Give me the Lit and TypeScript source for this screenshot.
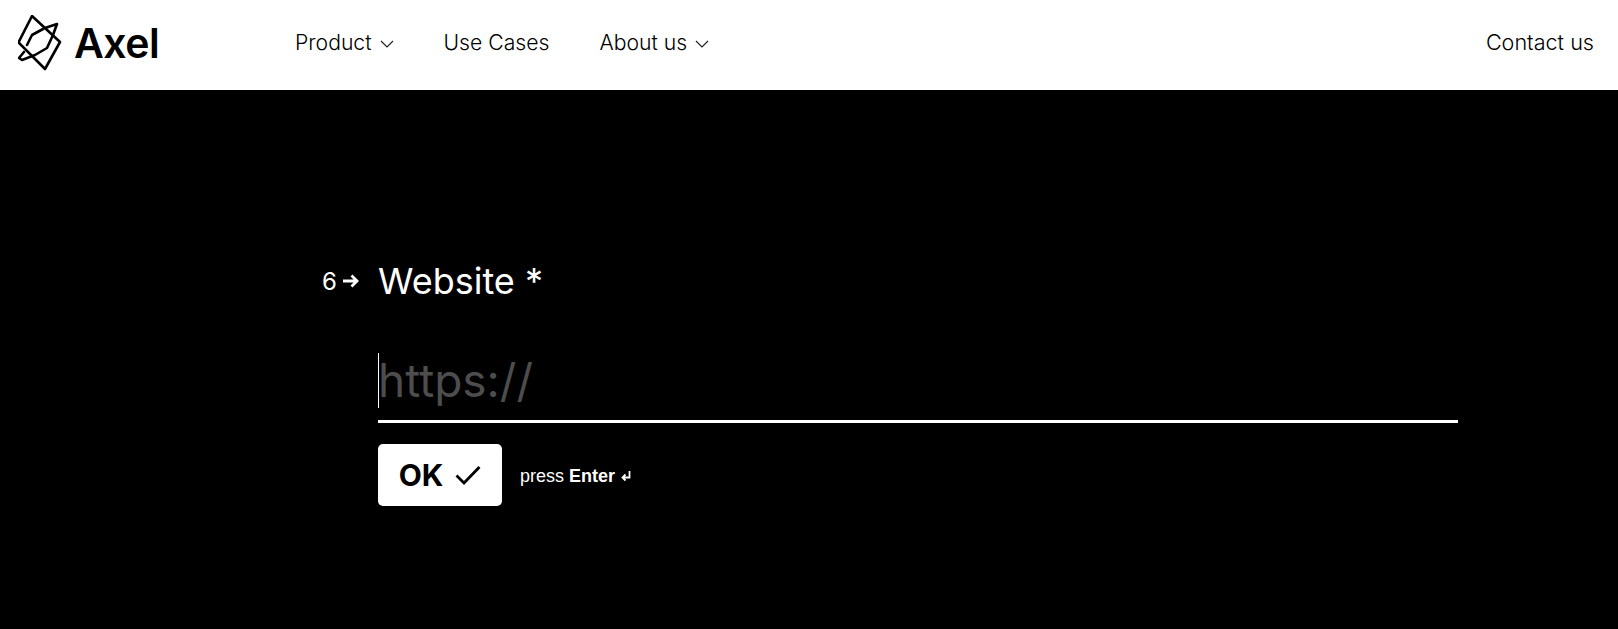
import { LitElement, html, css, svg } from "lit";
import { customElement } from "lit/decorators.js";

const chevron = svg`<svg class="chev" width="14" height="8" viewBox="0 0 14 8" fill="none" stroke="#222" stroke-width="1.2"><path d="M1 1 7 7 13 1"/></svg>`;

@customElement("app-root")
export class AppRoot extends LitElement {
  static styles = css`
    :host { display: block; width: 100%; height: 629px; background: #000; overflow: hidden; font-family: Inter, sans-serif; }
    header { height: 90px; background: #fff; display: flex; align-items: center; padding: 0 24px 4px 18px; box-sizing: border-box; }
    .brand { display: flex; align-items: center; gap: 12px; width: 277px; }
    .brand span { font-size: 41px; font-weight: 600; color: #000; letter-spacing: -0.5px; line-height: 1; }
    nav { display: flex; gap: 50px; flex: 1; padding-bottom: 2px; }
    .item { display: flex; align-items: center; gap: 8px; font-size: 21.2px; font-weight: 350; color: #000; }
    .chev { margin-top: 3px; }
    .contact { font-size: 21.6px; font-weight: 350; color: #000; padding-bottom: 2px; }
    main { display: grid; grid-template-columns: 56px 1080px; padding: 169px 0 0 322px; color: #fff; }
    .num { display: flex; align-items: center; gap: 5px; height: 44px; font-size: 24px; }
    h1 { margin: 0; font-size: 36px; font-weight: 400; line-height: 44px; }
    .field { grid-column: 2; margin-top: 50px; height: 70px; box-sizing: border-box; border-bottom: 3px solid #fff; position: relative; }
    .ph { font-size: 46px; line-height: 54px; color: #4d4d4d; }
    .caret { position: absolute; left: 0; top: 0; width: 1px; height: 55px; background: #fff; }
    .actions { grid-column: 2; display: flex; align-items: center; gap: 18px; margin-top: 21px; }
    .ok { width: 124px; height: 62px; border: 0; border-radius: 5px; background: #fff; color: #000; display: flex; align-items: center; justify-content: center; gap: 12px; font: 700 30px Inter, sans-serif; padding: 0; }
    .hint { font: 18px "Liberation Sans", sans-serif; display: flex; align-items: center; gap: 6px; margin-top: 2px; }
    .hint b { font-weight: 700; }
  `;

  render() {
    return html`
      <header>
        <div class="brand">
          <svg width="44" height="56" viewBox="18 15 44 56" fill="none" stroke="#000" stroke-width="2.600" stroke-linejoin="round" stroke-linecap="round">
            <path d="M32 16 60 42 45 69 18.500 42.500Z"/>
            <path d="M45 28 57 24 53 35 47 48 35 55 22 60 19 58 24 52"/>
            <path d="M43 29 32 35 27 45"/>
          </svg>
          <span>Axel</span>
        </div>
        <nav>
          <div class="item">Product ${chevron}</div>
          <div class="item">Use Cases</div>
          <div class="item">About us ${chevron}</div>
        </nav>
        <div class="contact">Contact us</div>
      </header>
      <main>
        <div class="num">6
          <svg width="18" height="14" viewBox="0 0 18 14" fill="none" stroke="#fff" stroke-width="2.800"><path d="M1 7h14M9.500 1.500 15 7l-5.500 5.500"/></svg>
        </div>
        <h1>Website *</h1>
        <div class="field"><div class="caret"></div><div class="ph">https://</div></div>
        <div class="actions">
          <button class="ok">OK
            <svg width="26" height="20" viewBox="0 0 26 20" fill="none" stroke="#000" stroke-width="2.800"><path d="M1.500 10.500 9 18 24.500 2"/></svg>
          </button>
          <div class="hint"><span>press <b>Enter</b></span>
            <svg width="10" height="11" viewBox="0 0 10 11" fill="none" stroke="#fff" stroke-width="1.800"><path d="M8.500 0v6.500H1.500M4.500 3.500 1.500 6.500 4.500 9.500"/></svg>
          </div>
        </div>
      </main>
    `;
  }
}
